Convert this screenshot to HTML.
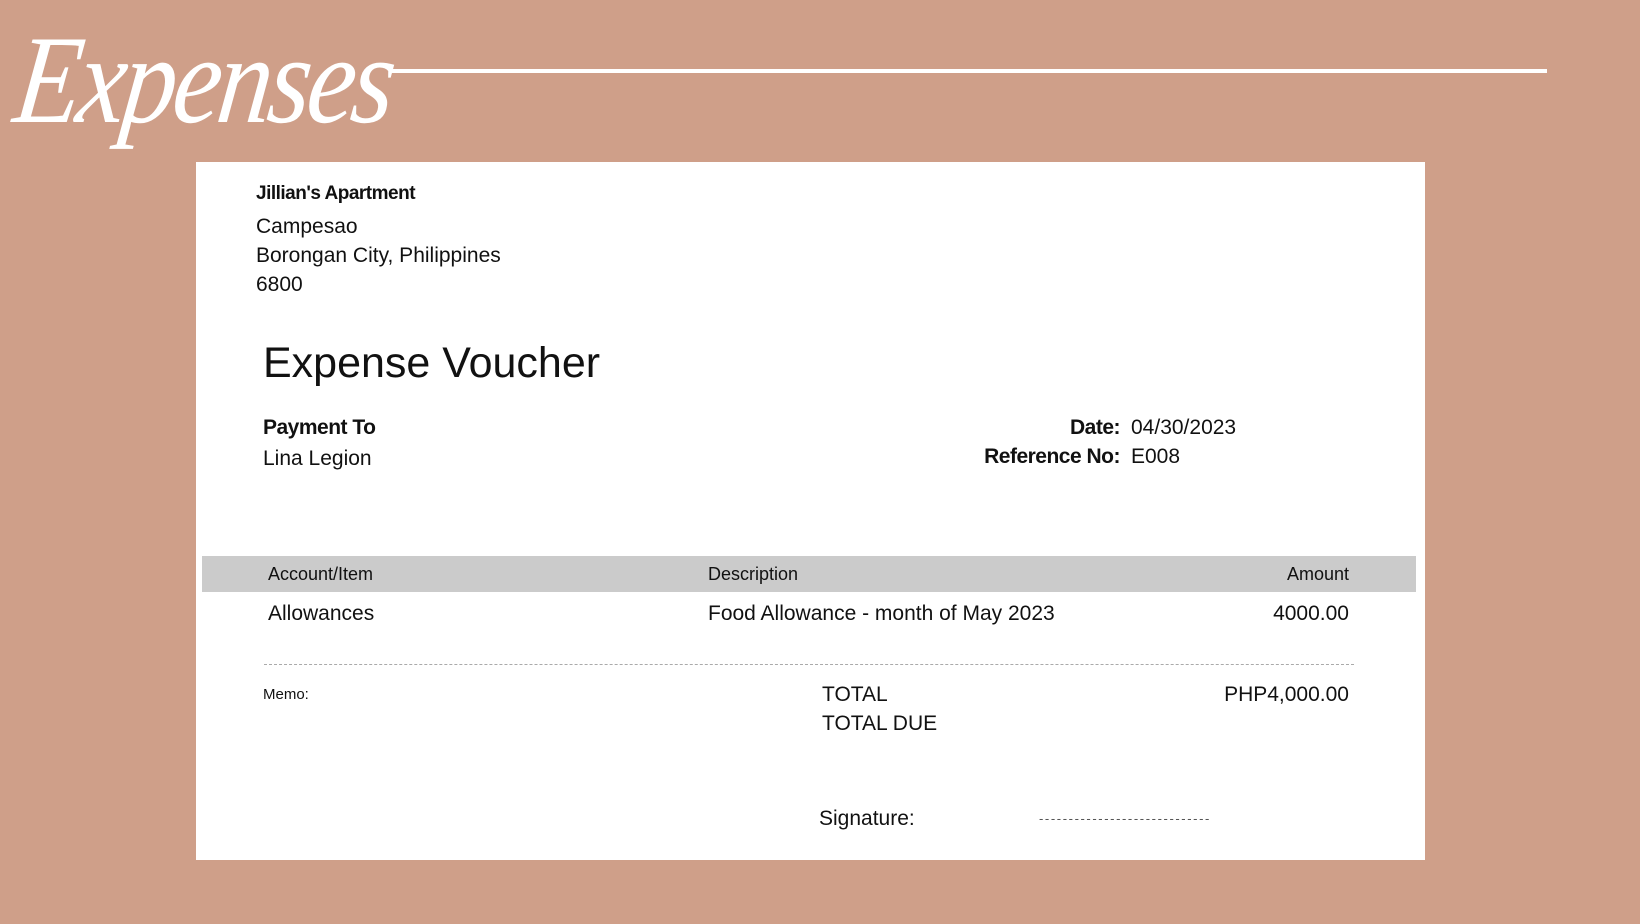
<!DOCTYPE html>
<html><head><meta charset="utf-8"><style>
*{margin:0;padding:0;box-sizing:border-box}
body{width:1640px;height:924px;background:#cf9f89;position:relative;overflow:hidden;font-family:"Liberation Sans",Arial,sans-serif;color:#111}
.a{position:absolute;white-space:nowrap;line-height:1}
.card{position:absolute;left:196px;top:162px;width:1229px;height:698px;background:#fff}
.t{font-size:21px;transform-origin:left center}
</style></head><body>
<div class="a" style="left:24px;top:18px;font-family:'Liberation Serif','DejaVu Serif',serif;font-style:italic;font-size:126px;color:#fff;letter-spacing:-4px;transform:scaleX(0.86) skewX(-8deg);transform-origin:left top">Expenses</div>
<div class="a" style="left:392px;top:69px;width:1155px;height:4px;background:#fff"></div>
<div class="card"></div>
<div class="a t" style="left:256px;top:184px;font-weight:bold;font-size:19px;letter-spacing:-0.5px">Jillian's Apartment</div>
<div class="a t" style="left:256px;top:216px">Campesao</div>
<div class="a t" style="left:256px;top:245px">Borongan City, Philippines</div>
<div class="a t" style="left:256px;top:274px">6800</div>
<div class="a" style="left:263px;top:342px;font-size:43px">Expense Voucher</div>
<div class="a t" style="left:263px;top:417px;font-weight:bold;letter-spacing:-0.5px">Payment To</div>
<div class="a t" style="left:263px;top:448px">Lina Legion</div>
<div class="a t" style="right:520px;top:417px;font-weight:bold;letter-spacing:-0.5px">Date:</div>
<div class="a t" style="left:1131px;top:417px">04/30/2023</div>
<div class="a t" style="right:520px;top:446px;font-weight:bold;letter-spacing:-0.5px">Reference No:</div>
<div class="a t" style="left:1131px;top:446px">E008</div>
<div class="a" style="left:202px;top:556px;width:1214px;height:36px;background:#cbcbcb"></div>
<div class="a" style="left:268px;top:565px;font-size:18px">Account/Item</div>
<div class="a" style="left:708px;top:565px;font-size:18px">Description</div>
<div class="a" style="right:291px;top:565px;font-size:18px">Amount</div>
<div class="a t" style="left:268px;top:603px">Allowances</div>
<div class="a t" style="left:708px;top:603px">Food Allowance - month of May 2023</div>
<div class="a t" style="right:291px;top:603px">4000.00</div>
<div class="a" style="left:264px;top:664px;width:1090px;border-top:1px dashed #aaa"></div>
<div class="a" style="left:263px;top:687px;font-size:15px">Memo:</div>
<div class="a t" style="left:822px;top:684px">TOTAL</div>
<div class="a t" style="left:822px;top:713px">TOTAL DUE</div>
<div class="a t" style="right:291px;top:684px">PHP4,000.00</div>
<div class="a t" style="left:819px;top:808px">Signature:</div>
<div class="a" style="left:1039px;top:812px;font-size:13px;color:#555;letter-spacing:1.6px">-----------------------------</div>
</body></html>
